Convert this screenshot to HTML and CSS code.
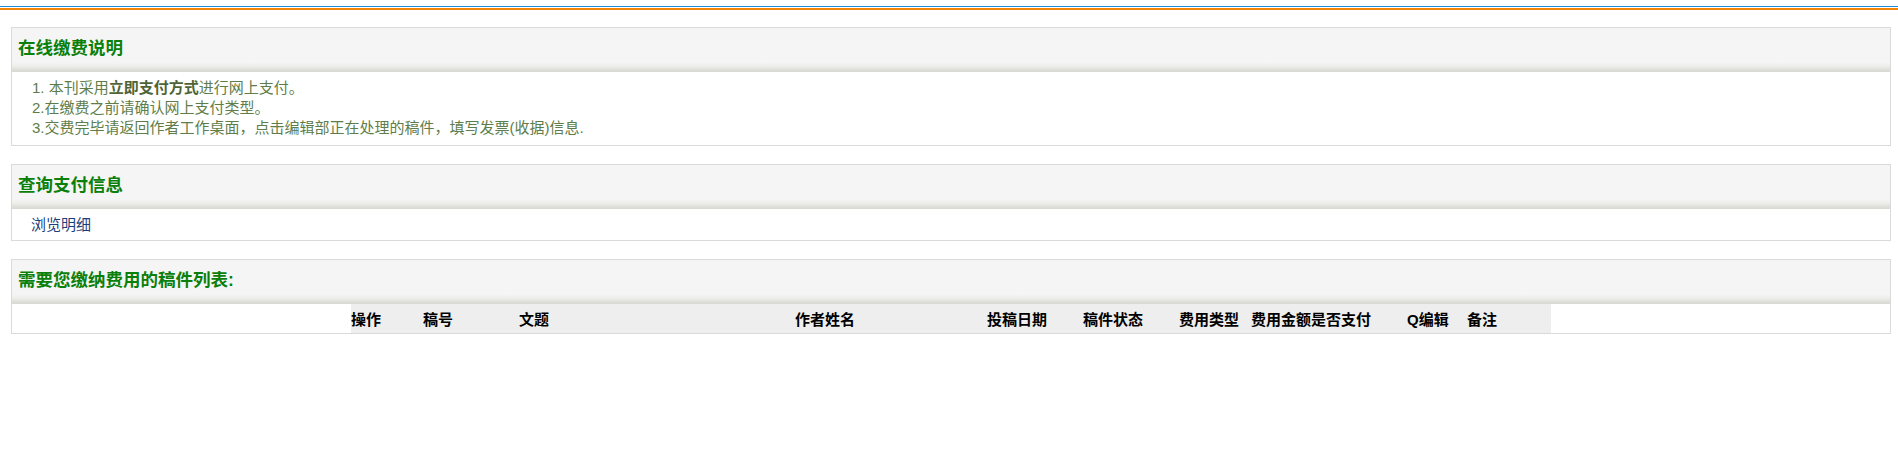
FILE: index.html
```html
<!DOCTYPE html>
<html lang="zh-CN">
<head>
<meta charset="utf-8">
<title>在线缴费</title>
<link rel="stylesheet" href="styles.css">
</head>
<body>
<div class="topbar"></div>
<div class="topline"></div>
<div class="page">
  <div class="panel">
    <div class="panel-head">在线缴费说明</div>
    <div class="panel-body notes">
      <p>1. 本刊采用<b>立即支付方式</b>进行网上支付。</p>
      <p>2.在缴费之前请确认网上支付类型。</p>
      <p>3.交费完毕请返回作者工作桌面，点击编辑部正在处理的稿件，填写发票(收据)信息.</p>
    </div>
  </div>
  <div class="panel">
    <div class="panel-head">查询支付信息</div>
    <div class="panel-body browse">
      <a class="browse-link" href="#">浏览明细</a>
    </div>
  </div>
  <div class="panel">
    <div class="panel-head">需要您缴纳费用的稿件列表:</div>
    <div class="panel-body">
      <table class="fee-table">
        <colgroup>
          <col class="c6"><col class="c8"><col class="c23"><col class="c16"><col class="c8"><col class="c8"><col class="c6"><col class="c13"><col class="c5"><col class="c7">
        </colgroup>
        <tr>
          <th>操作</th><th>稿号</th><th>文题</th><th>作者姓名</th><th>投稿日期</th><th>稿件状态</th><th>费用类型</th><th>费用金额是否支付</th><th>Q编辑</th><th>备注</th>
        </tr>
      </table>
    </div>
  </div>
</div>
</body>
</html>
```
FILE: styles.css
```css
html, body {
  margin: 0;
  padding: 0;
  background: #ffffff;
}
body {
  font-family: "Liberation Sans", "Noto Sans CJK SC", sans-serif;
  font-size: 15px;
}
.topbar {
  height: 6px;
  border-bottom: 1px solid #1c8ade;
}
.topline {
  margin-top: 1px;
  height: 2px;
  background: #f38406;
}
.page {
  padding: 17px 7px 0 11px;
}
.panel {
  border: 1px solid #dadada;
  margin-bottom: 18px;
}
.panel-head {
  height: 44px;
  line-height: 41px;
  padding-left: 6px;
  font-size: 17.5px;
  font-weight: bold;
  color: #0a800a;
  background: linear-gradient(to bottom, #f5f5f5 0, #f5f5f5 34px, #eeeeeb 38px, #e2e2dd 41px, #d8d8d2 44px);
}
.panel-body {
  background: #ffffff;
}
.notes {
  padding: 6px 0 7px 20px;
  color: #5e7d4a;
  line-height: 20px;
}
.notes p {
  margin: 0;
}
.notes b {
  color: #4f6436;
}
.browse {
  padding: 6px 0 5px 19px;
  line-height: 20px;
}
.browse-link {
  color: #1c3f7c;
  text-decoration: none;
}
.fee-table {
  width: 1200px;
  margin: 0 auto;
  border-collapse: collapse;
  border-spacing: 0;
  table-layout: fixed;
}
.fee-table th {
  height: 29px;
  padding: 0;
  background: #eeeeee;
  color: #000000;
  font-size: 15px;
  font-weight: bold;
  text-align: left;
  white-space: nowrap;
}
.c5 { width: 5%; }
.c6 { width: 6%; }
.c7 { width: 7%; }
.c8 { width: 8%; }
.c13 { width: 13%; }
.c16 { width: 16%; }
.c23 { width: 23%; }
```
